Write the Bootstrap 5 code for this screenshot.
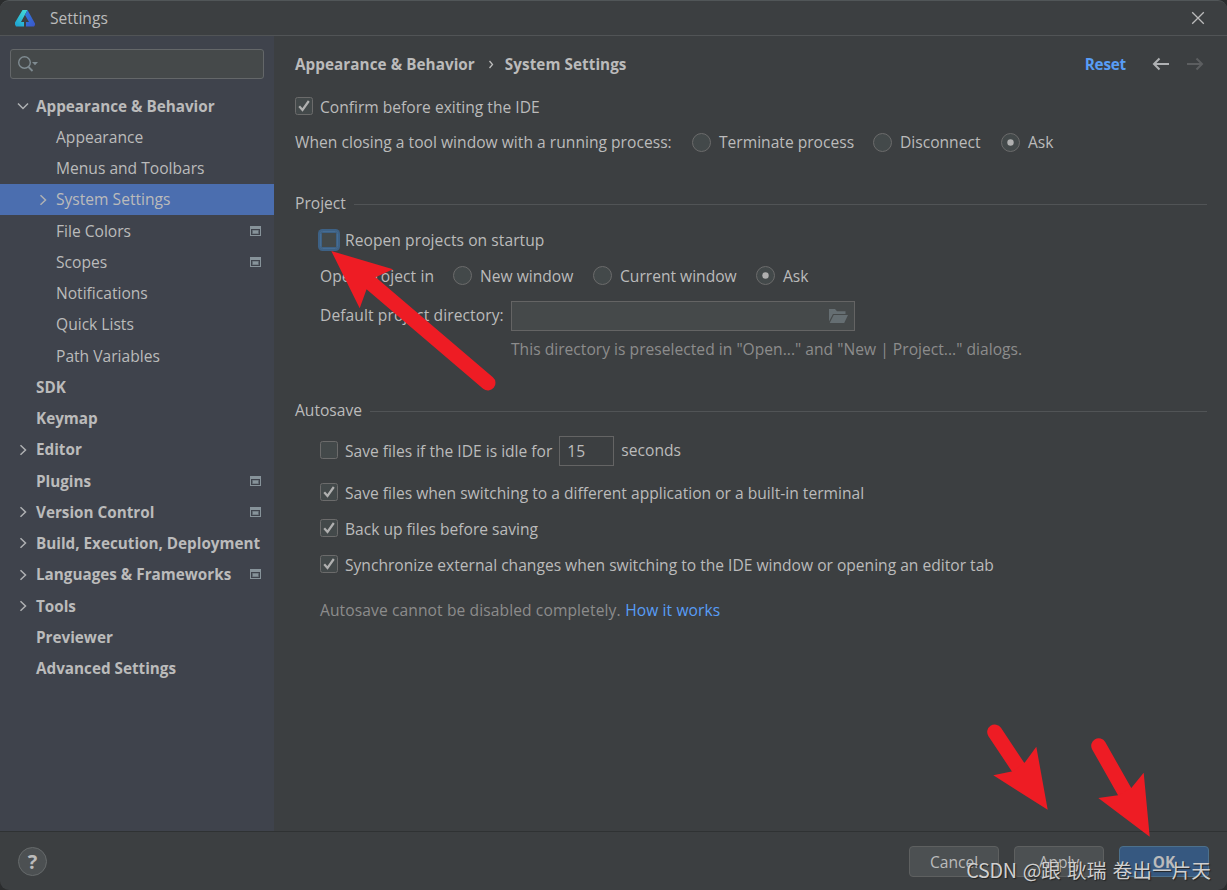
<!DOCTYPE html>
<html lang="en" data-bs-theme="dark">
<head>
<meta charset="utf-8">
<meta name="viewport" content="width=device-width, initial-scale=1">
<title>Settings</title>
<link href="https://cdn.jsdelivr.net/npm/bootstrap@5.3.0/dist/css/bootstrap.min.css" rel="stylesheet">
<style>
  body { background: #2b2d2e; color: #bbb; font: 15.6px/30px "Open Sans", "Noto Sans", sans-serif; overflow: hidden; }
  .dialog { height: 890px; background: #3c3f41; border-top: 1px solid #515658; border-radius: 9px; }
  .titlebar { height: 35px; border-bottom: 1px solid #515456; padding: 0 22px 0 15px; }
  .titlebar svg { flex: none; }
  .titlebar span { margin-left: 15px; }
  .sidebar { width: 274px; background: #3f434c; }
  .search { height: 30px; margin: 13px 10px 10.9px; background: #45494a; border: 1px solid #646769; border-radius: 3px; padding-left: 7px; }
  .tree a { height: 31.26px; color: #bbb; text-decoration: none; padding: 0 13px 0 36px; position: relative; white-space: nowrap; }
  .tree a.sub { padding-left: 56px; }
  .tree a.active { background: #4b6eaf; }
  .tree .chev { position: absolute; left: 17px; top: 10px; }
  .tree .sub .chev { left: 37px; }
  .fw-bold { font-size: 15.25px; }
  .page { padding: 10px 20px 0 21px; }
  .line { height: 30px; display: flex; align-items: center; white-space: nowrap; }
  .crumbs { height: 36px; margin-bottom: 10px; }
  .crumbs span { letter-spacing: .06px; }
  .crumb-sep { margin: 0 11px 0 13px; }
  .rule { flex: 1; height: 1px; background: #515456; margin-left: 8px; }
  .inner { padding-left: 25px; }
  .form-check-input.box, .form-check-input.dot { float: none; margin: 0; flex: none; background-color: #43494a; border: 1px solid #6b6b6b; box-shadow: none; }
  .form-check-input.box { width: 18px; height: 18px; border-radius: 2.5px; margin: -2px 7.5px 0 -.5px; }
  .form-check-input.box:checked { background-color: #43494a; background-size: 16px 16px; background-image: url("data:image/svg+xml,%3Csvg xmlns='http://www.w3.org/2000/svg' viewBox='0 0 16 16'%3E%3Cpath d='M3.2 8.2L6.5 12L12.8 3' fill='none' stroke='%23b0b0b0' stroke-width='2.2'/%3E%3C/svg%3E"); }
  .form-check-input.ring { border-color: #466d94; box-shadow: inset 0 0 0 1px #3d6185, 0 0 0 2px #3d6185; margin-top: 0; }
  .form-check-input.dot { width: 19px; height: 19px; margin-right: 8px; }
  .form-check-input.dot:checked { background-color: #43494a; background-size: 17px 17px; background-image: url("data:image/svg+xml,%3Csvg xmlns='http://www.w3.org/2000/svg' viewBox='0 0 17 17'%3E%3Ccircle cx='8.5' cy='8.5' r='3.2' fill='%23b0b0b0'/%3E%3C/svg%3E"); }
  .field { background: #45494a; border: 1px solid #646464; height: 30px; color: #bbb; line-height: 28px; }
  .dirfield { width: 344px; padding-right: 6px; }
  .numfield { width: 55px; padding-left: 7px; margin: 0 7px 0 7px; background: transparent; }
  .hint { color: #8c8c8c; }
  .lnk { color: #589df6; text-decoration: none; }
  .bottom { height: 59px; border-top: 1px solid #2f3233; padding: 0 18px; gap: 15px; }
  .bottom .btn { width: 90px; height: 31px; font-size: 15.6px; line-height: 29px; padding: 1px 0 0; border-radius: 4px; background: #4c5052; border: 1px solid #5e6060; color: #bbb; }
  .bottom .btn.ok { background: #365880; border-color: #4c708c; font-size: 15.25px; }
  .help { width: 29px; height: 29px; border-radius: 50%; background: #4c5052; border: 1px solid #666a6b; font-size: 20px; line-height: 27px; }
  .marks { position: absolute; left: 0; top: 0; pointer-events: none; }
  .stamp { position: absolute; right: 16px; bottom: 5px; font: 19.7px/30px "Noto Sans CJK SC", sans-serif; color: #d0d0d0; text-shadow: 1px 1px 1px #222; white-space: nowrap; word-spacing: 1.8px; }
  .stamp span { letter-spacing: -.25px; }

  .reset { margin-right: 26px; letter-spacing: -.2px; }
  .back { margin-right: 16px; }
  .fwd { margin-right: 3px; }
  .closing { margin-top: 5px; }
  .closing > span { width: 397px; letter-spacing: .02px; }
  .closing label:nth-of-type(1) { width: 181px; }
  .closing label:nth-of-type(2) { width: 128px; }
  .heading-project { margin-top: 32px; }
  .reopen, .openin, .backup { margin-top: 6px; }
  .reopen { letter-spacing: .06px; }
  .openin > span { width: 133px; letter-spacing: .1px; }
  .openin label:nth-of-type(1) { width: 140px; }
  .openin label:nth-of-type(2) { width: 163px; }
  .lift { padding-bottom: 1px; }
  .line > span.lift { padding-bottom: 2px; }
  .dirline { margin-top: 10px; }
  .dirline > span { width: 191px; padding-bottom: 2px; letter-spacing: .09px; }
  .dirhint { margin: 3px 0 0 191px; letter-spacing: .02px; }
  .heading-autosave { margin-top: 32px; }
  .idle { margin-top: 10px; }
  .switching { margin-top: 12px; }
  .note { margin-top: 15px; letter-spacing: .1px; }
  .note .lnk { margin-left: 4.5px; }
</style>
</head>
<body>
<svg class="d-none">
  <symbol id="right" viewBox="0 0 12 12"><path d="M3.5 1.2L8.5 6L3.5 10.8" fill="none" stroke="#afb1b3" stroke-width="1.5"/></symbol>
  <symbol id="down" viewBox="0 0 12 12"><path d="M1 3.5L6 8.5L11 3.5" fill="none" stroke="#afb1b3" stroke-width="1.5"/></symbol>
  <symbol id="proj" viewBox="0 0 11 10"><path d="M0 0H11V10H0Z M1 3V9H10V3Z" fill="#87939a" fill-rule="evenodd"/><rect x="2" y="4" width="7" height="4" fill="#5f6971"/><rect x="3" y="4.5" width="5" height="3" fill="#87939a"/></symbol>
</svg>
<div class="dialog d-flex flex-column position-relative overflow-hidden">
  <header class="titlebar d-flex align-items-center">
    <svg width="20" height="17" viewBox="0 0 20 17">
      <defs><linearGradient id="lg1" x1="0" y1="1" x2=".6" y2="0"><stop offset="0" stop-color="#1d9fd0"/><stop offset="1" stop-color="#3fd6d8"/></linearGradient>
      <linearGradient id="lg2" x1="0" y1="0" x2="1" y2="1"><stop offset="0" stop-color="#2f7fe0"/><stop offset="1" stop-color="#3b55c8"/></linearGradient></defs>
      <path d="M7.5 0H12.5L6 12H9V16.5H1L0 14.5V12.5Z" fill="url(#lg1)"/>
      <path d="M12.5 0L20 13.5V15L19 16.5H11V12H14L10 5Z" fill="url(#lg2)"/>
    </svg>
    <span>Settings</span>
    <svg class="ms-auto" width="14" height="14" viewBox="0 0 14 14"><path d="M1.2 1.2L12.8 12.8M12.8 1.2L1.2 12.8" stroke="#bbb" stroke-width="1.3"/></svg>
  </header>
  <div class="d-flex flex-grow-1">
    <aside class="sidebar flex-shrink-0">
      <div class="search d-flex align-items-center">
        <svg width="22" height="18" viewBox="0 0 22 18"><circle cx="6.5" cy="7.5" r="5.8" fill="none" stroke="#7f8b91" stroke-width="1.4"/><path d="M10.5 12L14.5 16" stroke="#7f8b91" stroke-width="1.8"/><path d="M14 7H20L17 10.3Z" fill="#7f8b91"/></svg>
      </div>
      <nav class="tree d-flex flex-column">
        <a href="#" class="d-flex align-items-center fw-bold"><svg class="chev" width="12" height="12"><use href="#down"/></svg>Appearance &amp; Behavior</a>
        <a href="#" class="d-flex align-items-center sub">Appearance</a>
        <a href="#" class="d-flex align-items-center sub">Menus and Toolbars</a>
        <a href="#" class="d-flex align-items-center sub active"><svg class="chev" width="12" height="12"><use href="#right"/></svg>System Settings</a>
        <a href="#" class="d-flex align-items-center sub">File Colors<svg class="ms-auto" width="11" height="10"><use href="#proj"/></svg></a>
        <a href="#" class="d-flex align-items-center sub">Scopes<svg class="ms-auto" width="11" height="10"><use href="#proj"/></svg></a>
        <a href="#" class="d-flex align-items-center sub">Notifications</a>
        <a href="#" class="d-flex align-items-center sub">Quick Lists</a>
        <a href="#" class="d-flex align-items-center sub">Path Variables</a>
        <a href="#" class="d-flex align-items-center fw-bold">SDK</a>
        <a href="#" class="d-flex align-items-center fw-bold">Keymap</a>
        <a href="#" class="d-flex align-items-center fw-bold"><svg class="chev" width="12" height="12"><use href="#right"/></svg>Editor</a>
        <a href="#" class="d-flex align-items-center fw-bold">Plugins<svg class="ms-auto" width="11" height="10"><use href="#proj"/></svg></a>
        <a href="#" class="d-flex align-items-center fw-bold"><svg class="chev" width="12" height="12"><use href="#right"/></svg>Version Control<svg class="ms-auto" width="11" height="10"><use href="#proj"/></svg></a>
        <a href="#" class="d-flex align-items-center fw-bold"><svg class="chev" width="12" height="12"><use href="#right"/></svg>Build, Execution, Deployment</a>
        <a href="#" class="d-flex align-items-center fw-bold"><svg class="chev" width="12" height="12"><use href="#right"/></svg>Languages &amp; Frameworks<svg class="ms-auto" width="11" height="10"><use href="#proj"/></svg></a>
        <a href="#" class="d-flex align-items-center fw-bold"><svg class="chev" width="12" height="12"><use href="#right"/></svg>Tools</a>
        <a href="#" class="d-flex align-items-center fw-bold">Previewer</a>
        <a href="#" class="d-flex align-items-center fw-bold">Advanced Settings</a>
      </nav>
    </aside>
    <main class="page flex-grow-1">
      <div class="line crumbs fw-bold">
        <span>Appearance &amp; Behavior</span>
        <svg class="crumb-sep" width="6" height="9" viewBox="0 0 6 9"><path d="M1.5 1L4.5 4.5L1.5 8" fill="none" stroke="#bbb" stroke-width="1.3"/></svg>
        <span>System Settings</span>
        <a href="#" class="lnk ms-auto reset">Reset</a>
        <svg class="back" width="18" height="14" viewBox="0 0 18 14"><path d="M17 7H2.5M7.5 1.5L2 7L7.5 12.5" fill="none" stroke="#afb1b3" stroke-width="2"/></svg>
        <svg class="fwd" width="18" height="14" viewBox="0 0 18 14"><path d="M1 7H15.5M10.5 1.5L16 7L10.5 12.5" fill="none" stroke="#5c5e60" stroke-width="2"/></svg>
      </div>
      <label class="line"><input class="form-check-input box" type="checkbox" checked>Confirm before exiting the IDE</label>
      <div class="line closing"><span>When closing a tool window with a running process:</span>
        <label class="line"><input class="form-check-input dot" type="radio" name="close">Terminate process</label>
        <label class="line"><input class="form-check-input dot" type="radio" name="close">Disconnect</label>
        <label class="line"><input class="form-check-input dot" type="radio" name="close" checked>Ask</label>
      </div>
      <div class="line heading-project"><span class="lift">Project</span><span class="rule"></span></div>
      <section class="inner">
        <label class="line reopen"><input class="form-check-input box ring" type="checkbox">Reopen projects on startup</label>
        <div class="line openin lift"><span>Open project in</span>
          <label class="line"><input class="form-check-input dot" type="radio" name="open">New window</label>
          <label class="line"><input class="form-check-input dot" type="radio" name="open">Current window</label>
          <label class="line"><input class="form-check-input dot" type="radio" name="open" checked>Ask</label>
        </div>
        <div class="line dirline"><span>Default project directory:</span>
          <div class="field dirfield d-flex align-items-center justify-content-end"><svg width="19" height="15" viewBox="0 0 19 15"><path d="M0 0H6L8 2.3H16.5V5H4L0 12.5Z" fill="#656e72"/><path d="M4.7 6H19L15.2 14H.7Z" fill="#656e72"/></svg></div>
        </div>
        <div class="line hint dirhint">This directory is preselected in "Open..." and "New | Project..." dialogs.</div>
      </section>
      <div class="line heading-autosave"><span class="lift">Autosave</span><span class="rule"></span></div>
      <section class="inner">
        <div class="line idle"><label class="line lift"><input class="form-check-input box" type="checkbox">Save files if the IDE is idle for</label><div class="field numfield">15</div><span class="lift">seconds</span></div>
        <label class="line switching"><input class="form-check-input box" type="checkbox" checked>Save files when switching to a different application or a built-in terminal</label>
        <label class="line backup"><input class="form-check-input box" type="checkbox" checked>Back up files before saving</label>
        <label class="line backup"><input class="form-check-input box" type="checkbox" checked>Synchronize external changes when switching to the IDE window or opening an editor tab</label>
        <div class="line hint note">Autosave cannot be disabled completely.<a href="#" class="lnk">How it works</a></div>
      </section>
    </main>
  </div>
  <footer class="bottom d-flex align-items-center">
    <div class="help text-center fw-bold">?</div>
    <button class="btn ms-auto">Cancel</button>
    <button class="btn">Apply</button>
    <button class="btn ok fw-bold">OK</button>
  </footer>
</div>
<svg class="marks" width="1227" height="890" fill="#ee1c24" stroke="#ee1c24" stroke-linecap="round">
  <path d="M488 383L372 284" stroke-width="15"/><path stroke="none" d="M331.3 251L393 269.3L375 277.5L366.3 290L359.7 308.3Z"/>
  <path d="M994.7 732L1020 770" stroke-width="15"/><path stroke="none" d="M1047.7 809.7L1036.3 746.7L1025 762.3L1012.7 771.3L993.3 775.3Z"/>
  <path d="M1098.7 745.7L1126 794" stroke-width="15"/><path stroke="none" d="M1149.7 836.7L1143.7 772.7L1131.3 788L1118 795.3L1098.3 798Z"/>
</svg>
<div class="stamp"><span>CSDN @</span>跟 耿瑞 卷出一片天</div>
<script src="https://cdn.jsdelivr.net/npm/bootstrap@5.3.0/dist/js/bootstrap.bundle.min.js"></script>
</body>
</html>
